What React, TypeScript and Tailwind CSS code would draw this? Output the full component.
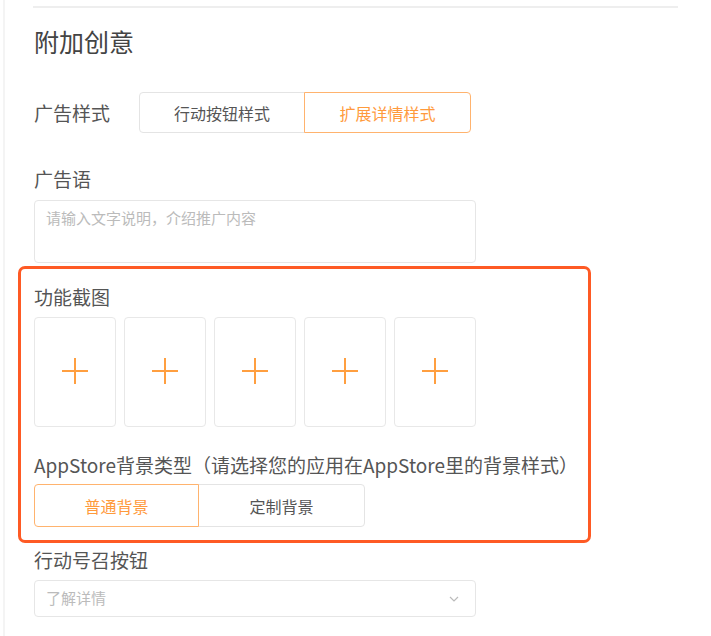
import React from "react";

const font = { fontFamily: '"Noto Sans CJK SC", "Noto Sans", sans-serif' };

function PlusBox() {
  return (
    <div className="w-[82px] h-[110px] rounded-[4px] border border-[#e8e8e8] flex items-center justify-center pb-[2px]">
      <svg width="26" height="26" viewBox="0 0 26 26" fill="none">
        <path d="M13 0v26M0 13h26" stroke="#ff9f40" strokeWidth="2" />
      </svg>
    </div>
  );
}

function Segmented({
  options,
  active,
  widths,
  height,
}: {
  options: string[];
  active: number;
  widths: string[];
  height: string;
}) {
  return (
    <div className={`flex ${height}`}>
      {options.map((o, i) => (
        <div
          key={o}
          className={`${widths[i]} flex items-center justify-center text-[16px] border ${
            i === active
              ? "border-[#ffb36e] text-[#ff9a3c] z-10"
              : "border-[#e4e4e4] text-[#555555]"
          } ${i === 0 ? "rounded-l-[4px]" : "rounded-r-[4px] -ml-px"}`}
        >
          {o}
        </div>
      ))}
    </div>
  );
}

export default function App() {
  return (
    <div className="w-[711px] h-[636px] bg-white flex overflow-hidden" style={font}>
      <div className="ml-[3px] border-l-2 border-[#f4f4f4] pl-[29px] flex-1 flex flex-col items-start">
        <div className="mt-[6px] -ml-[1px] w-[645px] h-[2px] bg-[#eeeeee]" />

        <h2 className="mt-[17px] text-[25px] leading-[32px] text-[#444444]">附加创意</h2>

        <div className="mt-[35px] flex items-center">
          <span className="w-[105px] text-[19px] leading-[24px] text-[#555555]">广告样式</span>
          <Segmented
            options={["行动按钮样式", "扩展详情样式"]}
            active={1}
            widths={["w-[166px]", "w-[167px]"]}
            height="h-[41px]"
          />
        </div>

        <div className="mt-[34px] text-[19px] leading-[24px] text-[#555555]">广告语</div>
        <div className="mt-[9px] w-[442px] h-[63px] rounded-[4px] border border-[#e6e6e6] px-[11px] pt-[5px] text-[15px] leading-[24px] text-[#bbbbbb]">
          请输入文字说明，介绍推广内容
        </div>

        <div className="mt-[3px] -ml-[16px] w-[573px] border-[3px] border-[#fe5a24] rounded-[7px] pl-[13px] pt-[16px] pb-[13px]">
          <div className="text-[19px] leading-[24px] text-[#555555]">功能截图</div>
          <div className="mt-[8px] flex gap-[8px]">
            <PlusBox />
            <PlusBox />
            <PlusBox />
            <PlusBox />
            <PlusBox />
          </div>
          <div className="mt-[26px] text-[19px] leading-[24px] text-[#555555] whitespace-nowrap">
            AppStore背景类型（请选择您的应用在AppStore里的背景样式）
          </div>
          <div className="mt-[7px]">
            <Segmented
              options={["普通背景", "定制背景"]}
              active={0}
              widths={["w-[165px]", "w-[167px]"]}
              height="h-[43px]"
            />
          </div>
        </div>

        <div className="mt-[5px] text-[19px] leading-[24px] text-[#555555]">行动号召按钮</div>
        <div className="mt-[8px] w-[442px] h-[37px] rounded-[4px] border border-[#e6e6e6] pl-[11px] pr-[16px] flex items-center justify-between">
          <span className="text-[15px] text-[#bbbbbb]">了解详情</span>
          <svg width="10" height="6" viewBox="0 0 10 6" fill="none">
            <path d="M1 1l4 4 4-4" stroke="#bbbbbb" strokeWidth="1.2" />
          </svg>
        </div>
      </div>
    </div>
  );
}
